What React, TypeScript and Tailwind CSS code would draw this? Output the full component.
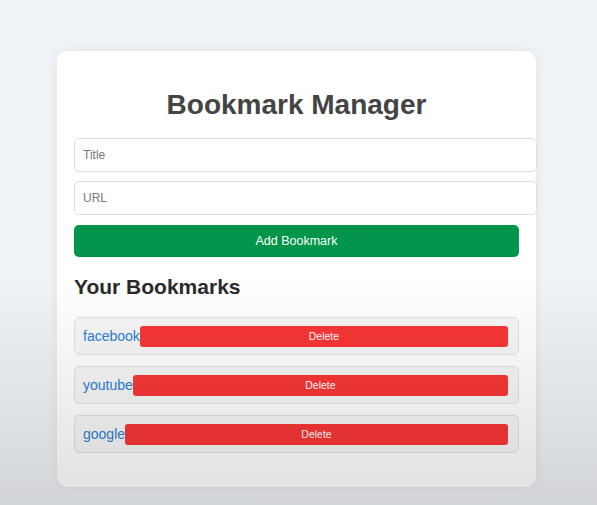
import { useState } from "react";

type Bookmark = { id: number; title: string; url: string };

const initialBookmarks: Bookmark[] = [
  { id: 1, title: "facebook", url: "https://facebook.com" },
  { id: 2, title: "youtube", url: "https://youtube.com" },
  { id: 3, title: "google", url: "https://google.com" },
];

export default function App() {
  const [bookmarks, setBookmarks] = useState(initialBookmarks);
  const [title, setTitle] = useState("");
  const [url, setUrl] = useState("");

  function addBookmark() {
    if (!title || !url) return;
    setBookmarks([...bookmarks, { id: Date.now(), title, url }]);
    setTitle("");
    setUrl("");
  }

  function removeBookmark(id: number) {
    setBookmarks(bookmarks.filter((b) => b.id !== id));
  }

  return (
    <div className="relative min-h-[505px] overflow-hidden bg-[#eff2f7] pt-[51px] font-['Liberation_Sans',Arial,sans-serif]">
      <div className="ml-[57px] w-[479px] rounded-[10px] bg-white px-[17px] pb-[34px] pt-[38px] shadow-[0_0_12px_rgba(0,0,0,0.06)]">
        <h1 className="text-center text-[28px] font-bold leading-[32px] text-[#444]">
          Bookmark Manager
        </h1>

        <div className="mt-[17px] flex flex-col gap-[9px]">
          <input
            value={title}
            onChange={(e) => setTitle(e.target.value)}
            placeholder="Title"
            className="box-content h-[32px] w-full rounded-[5px] border border-[#ddd] bg-white px-[8px] text-[12px] text-[#333] outline-none placeholder:text-[#777]"
          />
          <input
            value={url}
            onChange={(e) => setUrl(e.target.value)}
            placeholder="URL"
            className="box-content h-[32px] w-full rounded-[5px] border border-[#ddd] bg-white px-[8px] text-[12px] text-[#333] outline-none placeholder:text-[#777]"
          />
        </div>

        <button
          type="button"
          onClick={addBookmark}
          className="mt-[10px] h-[32px] w-full rounded-[5px] bg-[#00954a] text-[12.5px] text-white"
        >
          Add Bookmark
        </button>

        <h2 className="mt-[17px] text-[21px] font-bold leading-[26px] text-[#2a2a2a]">
          Your Bookmarks
        </h2>

        <ul className="mt-[17px] flex flex-col gap-[11px]">
          {bookmarks.map((b) => (
            <li
              key={b.id}
              className="flex h-[38px] items-center rounded-[5px] border border-[#e2e2e2] bg-[#f6f6f6] pl-[8px] pr-[10px]"
            >
              <a href={b.url} className="text-[14px] text-[#2a7fd4]">
                {b.title}
              </a>
              <button
                type="button"
                onClick={() => removeBookmark(b.id)}
                className="h-[21px] flex-1 rounded-[3px] bg-[#f83636] pt-[1px] text-[10.5px] text-white"
              >
                Delete
              </button>
            </li>
          ))}
        </ul>
      </div>

      {/* darkening toward the bottom, as in the capture */}
      <div className="pointer-events-none absolute inset-0 bg-[linear-gradient(to_bottom,transparent_0%,transparent_55%,rgba(0,0,0,0.12)_100%)]" />
    </div>
  );
}
